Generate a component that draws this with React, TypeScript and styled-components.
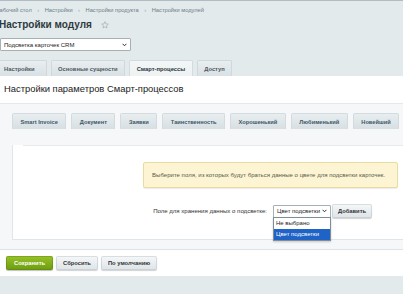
import React from "react";
import styled, { createGlobalStyle } from "styled-components";

const GlobalStyle = createGlobalStyle`
  html, body {
    margin: 0;
    padding: 0;
  }
  body {
    background: #e2eaec;
    font-family: "Liberation Sans", Arial, sans-serif;
    overflow: hidden;
  }
`;

const Page = styled.div`
  width: 440px;
  margin-left: -8px;
  border-top: 1px solid #b3bdc1;
`;

const Breadcrumbs = styled.div`
  display: flex;
  align-items: center;
  gap: 5.5px;
  margin-top: 5px;
  padding-left: 4px;
  font-size: 5.7px;
  line-height: 9px;
  color: #6c7e87;
  white-space: nowrap;
`;

const Crumb = styled.span``;

const Sep = styled.span`
  color: #9aa8ae;
  font-size: 6px;
`;

const TitleRow = styled.div`
  display: flex;
  align-items: center;
  gap: 9px;
  margin-top: 2px;
  padding-left: 7px;
  height: 14px;
`;

const Title = styled.h1`
  margin: 0;
  font-size: 10px;
  font-weight: bold;
  color: #2f3a40;
`;

const Star = styled.svg`
  width: 8px;
  height: 8px;
  margin-top: 1px;
`;

const Select = styled.div<{ $width: number }>`
  position: relative;
  display: flex;
  align-items: center;
  justify-content: space-between;
  box-sizing: border-box;
  width: ${(p) => p.$width}px;
  height: 13px;
  padding: 0 3px 0 3px;
  background: #fff;
  border: 1px solid #a6b1b6;
  border-radius: 1px;
  font-size: 6px;
  color: #222;
  white-space: nowrap;
`;

const TopSelect = styled(Select)`
  margin: 7px 0 0 8px;
`;

const Chevron = () => (
  <svg width="5" height="4" viewBox="0 0 5 4">
    <polyline points="0.6,0.8 2.5,2.8 4.4,0.8" fill="none" stroke="#333" strokeWidth="1" />
  </svg>
);

const Tabs = styled.div`
  display: flex;
  gap: 4px;
  margin-top: 9px;
  height: 16px;
`;

const Tab = styled.div<{ $active?: boolean }>`
  display: flex;
  align-items: center;
  padding: 0 6.5px;
  height: 16px;
  box-sizing: border-box;
  font-size: 5.8px;
  font-weight: bold;
  white-space: nowrap;
  color: ${(p) => (p.$active ? "#2c363b" : "#4c5a61")};
  background: ${(p) =>
    p.$active
      ? "linear-gradient(#f3f6f7, #eef2f3)"
      : "linear-gradient(#e9eef0, #d9e1e4)"};
  border: 1px solid ${(p) => (p.$active ? "#d3dbde" : "#cfd8dc")};
  border-bottom: none;
  border-radius: 2px 2px 0 0;

  &:first-child {
    padding: 0 11px;
  }
`;

const Panel = styled.div`
  background: #fff;
`;

const PanelHeading = styled.div`
  padding: 7px 0 8px 12px;
  font-size: 9.4px;
  line-height: 12px;
  color: #222;
  border-bottom: 1px solid #e3e8ea;
`;

const Sheet = styled.div`
  background: #f5f7f8;
  padding: 9px 0 9px 20px;
  border-bottom: 1px solid #dde3e6;
`;

const InnerTabs = styled.div`
  display: flex;
  gap: 5px;
  height: 16px;
`;

const InnerTab = styled.div<{ $active?: boolean }>`
  display: flex;
  align-items: center;
  height: 16px;
  box-sizing: border-box;
  padding: 0 7.5px;
  font-size: 5.7px;
  font-weight: bold;
  white-space: nowrap;
  color: #3d5769;
  background: ${(p) => (p.$active ? "#fff" : "linear-gradient(#e8eef0, #d7dfe2)")};
  border: 1px solid ${(p) => (p.$active ? "#dfe5e8" : "#d3dbdf")};
  border-bottom: none;
  border-radius: 2px 2px 0 0;
`;

const Content = styled.div`
  background: #fff;
  border-left: 1px solid #dfe5e8;
  border-bottom: 1px solid #dfe5e8;
  padding-bottom: 21px;
`;

const Divider = styled.div`
  margin: 16px 0 0 10px;
  border-top: 1px solid #e6eaec;
`;

const Notice = styled.div`
  box-sizing: border-box;
  margin: 16px 0 0 130px;
  width: 255px;
  height: 26px;
  display: flex;
  align-items: center;
  padding-left: 8px;
  background: #fcf4d2;
  border: 1px solid #eadc9f;
  border-radius: 2px;
  box-shadow: 0 1px 1px rgba(0, 0, 0, 0.08);
  font-size: 6.05px;
  color: #5a5a4c;
  white-space: nowrap;
`;

const FieldRow = styled.div`
  display: grid;
  grid-template-columns: 260px auto auto;
  align-items: center;
  justify-content: start;
  margin-top: 16px;
  height: 14px;
`;

const Label = styled.span`
  text-align: right;
  padding-right: 6px;
  font-size: 6.05px;
  color: #333;
  white-space: nowrap;
`;

const Dropdown = styled.div`
  position: absolute;
  top: 11px;
  left: -1px;
  right: -1px;
  background: #fff;
  border: 1px solid #7f8d96;
  box-shadow: 0 1px 2px rgba(0, 0, 0, 0.2);
`;

const Option = styled.div<{ $selected?: boolean }>`
  height: 11px;
  padding-left: 2px;
  display: flex;
  align-items: center;
  font-size: 6px;
  color: ${(p) => (p.$selected ? "#fff" : "#222")};
  background: ${(p) => (p.$selected ? "#1f63c6" : "#fff")};
`;

const Button = styled.button<{ $primary?: boolean }>`
  height: 14px;
  padding: 0 ${(p) => (p.$primary ? 8 : 7)}px;
  font-family: inherit;
  font-size: 5.8px;
  font-weight: bold;
  color: ${(p) => (p.$primary ? "#fff" : "#333")};
  background: ${(p) =>
    p.$primary
      ? "linear-gradient(#97c22a, #6c9c0f)"
      : "linear-gradient(#f6f8f9, #dde4e7)"};
  border: none;
  border-radius: 2px;
  box-shadow: ${(p) =>
    p.$primary
      ? "0 1px 1px rgba(0,0,0,0.25), inset 0 0 0 1px rgba(80,120,0,0.35)"
      : "0 1px 1px rgba(0,0,0,0.18), inset 0 0 0 1px rgba(160,175,182,0.35)"};
  white-space: nowrap;
`;

const AddButton = styled(Button)`
  margin-left: 1px;
  padding: 0 6px;
`;

const Footer = styled.div`
  display: flex;
  gap: 3px;
  padding: 6px 0 6px 14px;
`;

const crumbs = ["Рабочий стол", "Настройки", "Настройки продукта", "Настройки модулей"];
const topTabs = ["Настройки", "Основные сущности", "Смарт-процессы", "Доступ"];
const innerTabs = [
  "Smart Invoice",
  "Документ",
  "Заявки",
  "Таинственность",
  "Хорошенький",
  "Любименький",
  "Новейший",
];

export default function App() {
  return (
    <>
      <GlobalStyle />
      <Page>
        <Breadcrumbs>
          {crumbs.map((c, i) => (
            <React.Fragment key={c}>
              {i > 0 && <Sep>›</Sep>}
              <Crumb>{c}</Crumb>
            </React.Fragment>
          ))}
        </Breadcrumbs>
        <TitleRow>
          <Title>Настройки модуля</Title>
          <Star viewBox="0 0 24 24">
            <polygon
              points="12,2 14.9,8.6 22,9.3 16.6,14 18.2,21 12,17.3 5.8,21 7.4,14 2,9.3 9.1,8.6"
              fill="none"
              stroke="#9eabb2"
              strokeWidth="2"
              strokeLinejoin="round"
            />
          </Star>
        </TitleRow>
        <TopSelect $width={131}>
          <span>Подсветка карточек CRM</span>
          <Chevron />
        </TopSelect>
        <Tabs>
          {topTabs.map((t) => (
            <Tab key={t} $active={t === "Смарт-процессы"}>
              {t}
            </Tab>
          ))}
        </Tabs>
        <Panel>
          <PanelHeading>Настройки параметров Смарт-процессов</PanelHeading>
          <Sheet>
            <InnerTabs>
              {innerTabs.map((t) => (
                <InnerTab key={t}>{t}</InnerTab>
              ))}
              <InnerTab $active>Ещё</InnerTab>
            </InnerTabs>
            <Content>
              <Divider />
              <Notice>
                Выберите поля, из которых будут браться данные о цвете для подсветки карточек.
              </Notice>
              <FieldRow>
                <Label>Поле для хранения данных о подсветке:</Label>
                <Select $width={58}>
                  <span>Цвет подсветки</span>
                  <Chevron />
                  <Dropdown>
                    <Option>Не выбрано</Option>
                    <Option $selected>Цвет подсветки</Option>
                  </Dropdown>
                </Select>
                <AddButton>Добавить</AddButton>
              </FieldRow>
            </Content>
          </Sheet>
          <Footer>
            <Button $primary>Сохранить</Button>
            <Button>Сбросить</Button>
            <Button>По умолчанию</Button>
          </Footer>
        </Panel>
      </Page>
    </>
  );
}
